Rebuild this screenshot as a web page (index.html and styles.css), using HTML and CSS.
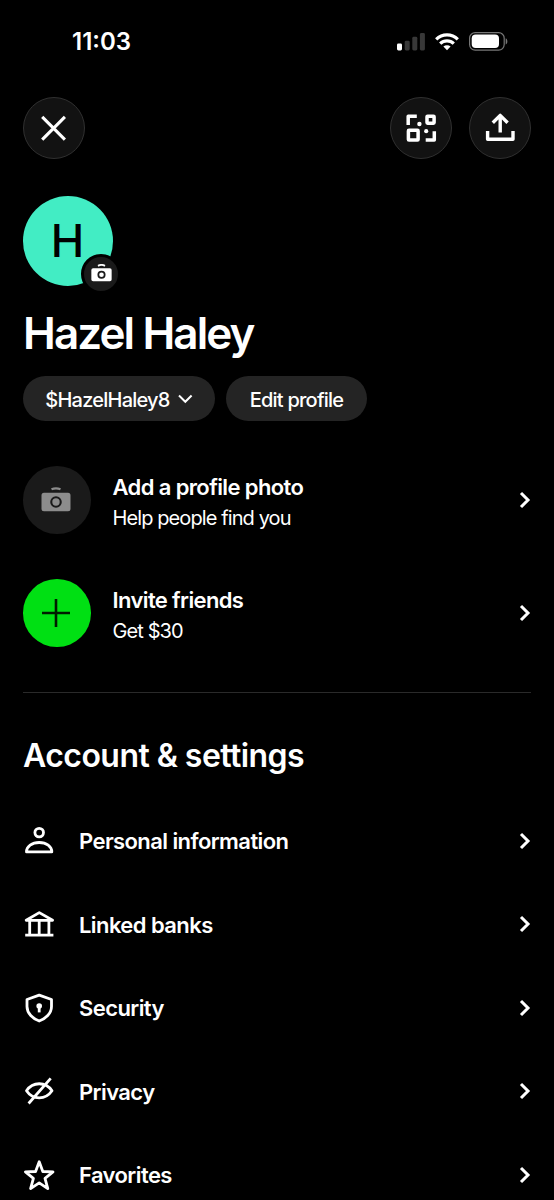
FILE: index.html
```html
<!DOCTYPE html>
<html lang="en">
<head>
<meta charset="utf-8">
<title>Profile</title>
<link rel="stylesheet" href="styles.css">
</head>
<body>
<div class="screen">
  <div class="status">
    <span class="time">11:03</span>
    <div class="status-icons">
      <svg width="28" height="18" viewBox="0 0 28 18"><rect x="0" y="10.5" width="5" height="7" rx="1.4" fill="#fff"/><g fill="#383838"><rect x="7.7" y="7.7" width="5" height="9.8" rx="1.4"/><rect x="15.3" y="3.8" width="5" height="13.7" rx="1.4"/><rect x="22.9" y="0" width="5" height="17.5" rx="1.4"/></g></svg>
      <svg class="wifi" width="24" height="18" viewBox="0 0 24 18"><g fill="none" stroke="#fff" stroke-width="3.2"><path d="M1.2 6.3a15.4 15.4 0 0 1 21.6 0"/><path d="M5.2 10.6a9.7 9.7 0 0 1 13.6 0"/></g><path d="M12 17.2l-3.6-3.6a5.2 5.2 0 0 1 7.2 0z" fill="#fff"/></svg>
      <svg class="battery" width="39" height="19" viewBox="0 0 39 19"><rect x=".6" y=".6" width="34.6" height="17.6" rx="5.6" fill="none" stroke="#777" stroke-width="1.2"/><rect x="2.7" y="2.6" width="27.3" height="13.5" rx="4" fill="#fff"/><path d="M36.7 6.2c2.2.9 2.2 5.4 0 6.3z" fill="#777"/></svg>
    </div>
  </div>

  <header class="topbar">
    <button class="round" aria-label="Close"><svg width="60" height="60" viewBox="0 0 60 60"><path d="M18.2 18.9L40.9 41.6M40.9 18.9L18.2 41.6" stroke="#fff" stroke-width="3.1"/></svg></button>
    <div class="actions">
      <button class="round" aria-label="QR code"><svg width="60" height="60" viewBox="0 0 60 60"><g fill="none" stroke="#fff" stroke-width="3.5" stroke-linejoin="round"><path d="M17.2 27V18.3H25.8"/><rect x="36" y="18.2" width="7.1" height="7" rx=".6"/><rect x="17.4" y="32.3" width="9.7" height="9.8" rx=".6"/><path d="M43.3 33.3V42H34.7"/></g><circle cx="28.4" cy="26" r="2.2" fill="#fff"/><circle cx="35.2" cy="33.2" r="2.1" fill="#fff"/></svg></button>
      <button class="round" aria-label="Share"><svg width="60" height="60" viewBox="0 0 60 60"><path d="M30.2 34.5V18.5M22.8 24.8L30.2 17.4L37.6 24.8M17.6 33V41.3H43V33" fill="none" stroke="#fff" stroke-width="3.4" stroke-linejoin="round"/></svg></button>
    </div>
  </header>

  <section class="profile">
    <div class="avatar"><span>H</span>
      <div class="badge"><svg width="21" height="18" viewBox="0 0 30 25"><path d="M10 2.3q5-2.8 10 0" fill="none" stroke="#fff" stroke-width="2.6"/><path fill-rule="evenodd" d="M3 5.8H27a2.5 2.5 0 0 1 2.5 2.5V21.7a2.5 2.5 0 0 1-2.5 2.5H3A2.5 2.5 0 0 1 .5 21.7V8.3A2.5 2.5 0 0 1 3 5.8zM15 9.2a5.8 5.8 0 1 0 0 11.6a5.8 5.8 0 1 0 0-11.6zM15 11.7a3.3 3.3 0 1 1 0 6.6a3.3 3.3 0 1 1 0-6.6z" fill="#fff"/></svg></div>
    </div>
    <h1>Hazel Haley</h1>
    <div class="pills">
      <button class="pill tag"><span>$HazelHaley8</span><svg width="15" height="10" viewBox="0 0 15 10"><path d="M1 1.5L7.3 7.8L13.6 1.5" fill="none" stroke="#fff" stroke-width="2"/></svg></button>
      <button class="pill edit"><span>Edit profile</span></button>
    </div>
  </section>

  <section class="promos">
    <div class="promo">
      <div class="disc"><svg width="30" height="25" viewBox="0 0 30 25"><path d="M10.5 2.3q4.5-2 9 0" fill="none" stroke="#8c8c8c" stroke-width="2.2"/><path fill-rule="evenodd" d="M3 5.8H27a2.5 2.5 0 0 1 2.5 2.5V21.7a2.5 2.5 0 0 1-2.5 2.5H3A2.5 2.5 0 0 1 .5 21.7V8.3A2.5 2.5 0 0 1 3 5.8zM15 9.2a5.8 5.8 0 1 0 0 11.6a5.8 5.8 0 1 0 0-11.6zM15 11.3a3.7 3.7 0 1 1 0 7.4a3.7 3.7 0 1 1 0-7.4z" fill="#8c8c8c"/></svg></div>
      <div class="copy"><strong>Add a profile photo</strong><span>Help people find you</span></div>
      <svg class="chev" width="12" height="18" viewBox="0 0 12 18"><path d="M2 2L9 9L2 16"/></svg>
    </div>
    <div class="promo">
      <div class="disc green"><svg width="30" height="30" viewBox="0 0 30 30"><path d="M15 1V29M1 15H29" stroke="#001c00" stroke-width="2.6"/></svg></div>
      <div class="copy"><strong>Invite friends</strong><span>Get $30</span></div>
      <svg class="chev" width="12" height="18" viewBox="0 0 12 18"><path d="M2 2L9 9L2 16"/></svg>
    </div>
  </section>

  <section class="settings">
    <h2>Account &amp; settings</h2>
    <div class="row"><svg class="ico" width="32" height="32" viewBox="0 0 32 32"><circle cx="16.2" cy="7.6" r="4.3"/><path d="M3.5 26.9C3.5 21.5 9 17.5 16.2 17.5S28.8 21.5 28.8 26.9z" stroke-linejoin="round"/></svg><span>Personal information</span><svg class="chev" width="12" height="18" viewBox="0 0 12 18"><path d="M2 2L9 9L2 16"/></svg></div>
    <div class="row"><svg class="ico" width="32" height="32" viewBox="0 0 32 32"><path d="M2.2 27.2H30.4M3.2 12.3H29.6L16.3 4.6zM6.7 12.4V26.6M16.2 12.4V26.6M25.9 12.4V26.6" stroke-linejoin="round"/></svg><span>Linked banks</span><svg class="chev" width="12" height="18" viewBox="0 0 12 18"><path d="M2 2L9 9L2 16"/></svg></div>
    <div class="row"><svg class="ico" width="32" height="32" viewBox="0 0 32 32"><path d="M16.2 3.1L28.5 7.5V14.5C28.5 21.5 22.5 26.7 16.2 29C9.9 26.7 4 21.5 4 14.5V7.5z" stroke-linejoin="round"/><circle cx="16.2" cy="14" r="2.8" fill="#fff" stroke="none"/><path d="M16.2 14V20.4"/></svg><span>Security</span><svg class="chev" width="12" height="18" viewBox="0 0 12 18"><path d="M2 2L9 9L2 16"/></svg></div>
    <div class="row"><svg class="ico" width="32" height="32" viewBox="0 0 32 32"><path d="M3.5 15.8C9.8 6.4 22.6 6.4 29 15.8C22.6 25.2 9.800 25.200 3.500 15.800zM5.600 28.500L27.700 3.300" stroke-linejoin="round"/></svg><span>Privacy</span><svg class="chev" width="12" height="18" viewBox="0 0 12 18"><path d="M2 2L9 9L2 16"/></svg></div>
    <div class="row"><svg class="ico" width="32" height="32" viewBox="0 0 32 32"><path d="M16.2 2.8L19.8 12.500L30 12.900L22 19.300L24.800 29.600L16.200 23.900L7.600 29.600L10.400 19.300L2.400 12.900L12.600 12.500z" stroke-linejoin="round"/></svg><span>Favorites</span><svg class="chev" width="12" height="18" viewBox="0 0 12 18"><path d="M2 2L9 9L2 16"/></svg></div>
  </section>
</div>
</body>
</html>
```

FILE: styles.css
```css
* { box-sizing: border-box; }
html, body { margin: 0; background: #000; }
body { height: 1200px; overflow: hidden; font-family: Inter, "Liberation Sans", sans-serif; color: #fff; }
svg { display: block; flex: none; }
h1, h2 { margin: 0; font-weight: 600; white-space: nowrap; }
button { padding: 0; border: 0; color: #fff; font: inherit; }
.screen { width: 554px; height: 1200px; overflow: hidden; padding: 0 23px; }

.status { height: 97px; padding: 25px 23px 0 49px; display: flex; justify-content: space-between; align-items: flex-start; }
.time { font-size: 24px; line-height: 34px; font-weight: 600; letter-spacing: 0; }
.status-icons { display: flex; align-items: center; margin-top: 7px; }
.status-icons svg:first-child { margin-right: 0; }
.wifi { margin-left: 10px; }
.battery { margin-left: 10px; }

.topbar { display: flex; justify-content: space-between; }
.actions { display: flex; gap: 17px; }
.round { width: 62px; height: 62px; border-radius: 50%; background: #121212; border: 1px solid #303030; display: flex; }

.avatar { position: relative; width: 90px; height: 90px; margin-top: 37px; border-radius: 50%; background: #42edc4; color: #000; display: flex; align-items: center; justify-content: center; font-size: 45px; font-weight: 500; line-height: 54px; padding: 0 1px 1px 0; }
.badge { position: absolute; left: 58px; top: 58px; width: 40px; height: 40px; border: 3px solid #000; border-radius: 50%; background: #1a1a1a; display: flex; align-items: center; justify-content: center; padding-bottom: 2px; }
h1 { font-size: 44px; line-height: 54px; margin-top: 20px; letter-spacing: -1.9px; }
.pills { display: flex; gap: 11px; margin-top: 16px; }
.pill { height: 45px; border-radius: 23px; background: #242424; display: flex; align-items: center; justify-content: center; font-size: 20px; font-weight: 540; letter-spacing: -0.77px; white-space: nowrap; }
.pill span { padding-top: 2px; }
.tag { width: 192px; gap: 8px; }
.edit { width: 141px; }

.promos { margin-top: 45px; display: grid; gap: 45px; padding-bottom: 45px; border-bottom: 1px solid #2a2a2a; }
.promo { height: 68px; display: flex; align-items: center; }
.disc { width: 67.5px; height: 67.5px; border-radius: 50%; background: #1a1a1a; display: flex; align-items: center; justify-content: center; padding: 0 1px 2px 0; }
.green { background: #00e013; padding-bottom: 0; }
.copy { margin-left: 22px; padding-top: 6px; display: grid; line-height: 31px; white-space: nowrap; }
.copy strong { font-size: 22px; font-weight: 560; letter-spacing: -0.62px; }
.copy span { font-size: 20px; letter-spacing: -0.9px; }
.chev { margin-left: auto; fill: none; stroke: #fff; stroke-width: 3; }

h2 { font-size: 32px; line-height: 40px; margin: 43px 0 23px; letter-spacing: -0.55px; }
.row { height: 83.5px; display: flex; align-items: center; font-size: 22px; font-weight: 560; letter-spacing: -0.58px; white-space: nowrap; }
.row span { margin-left: 24px; padding-top: 1px; }
.ico { fill: none; stroke: #fff; stroke-width: 2.8; }
```
